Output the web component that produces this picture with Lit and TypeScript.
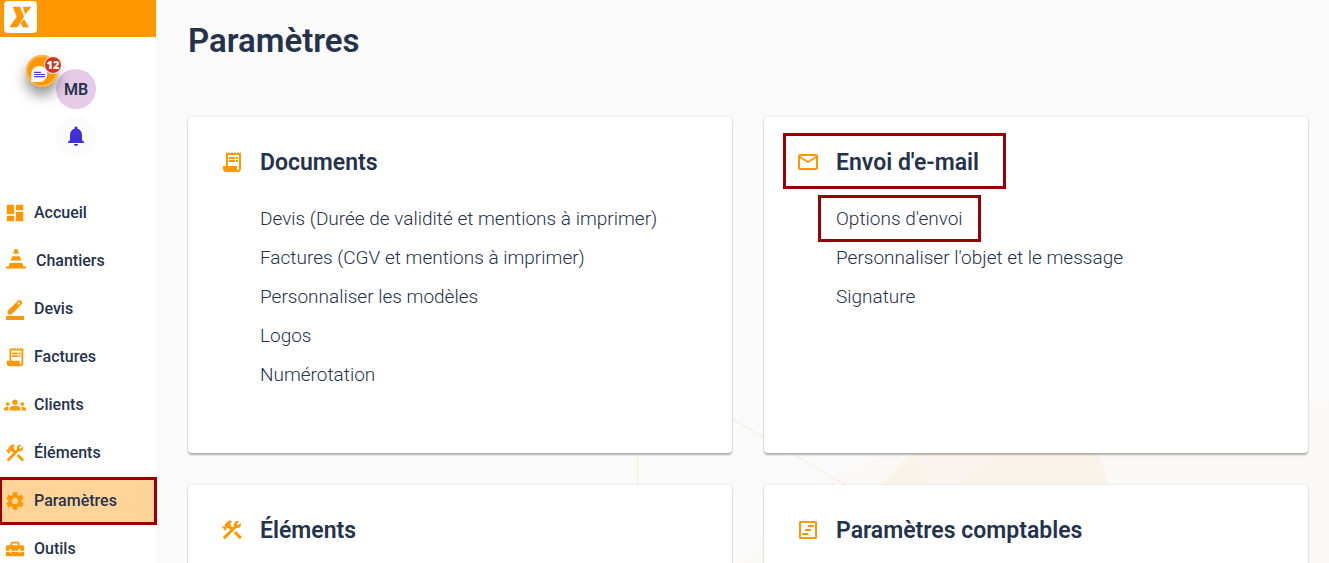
import { LitElement, html, css, svg } from "lit";
import { customElement, property } from "lit/decorators.js";
import { classMap } from "lit/directives/class-map.js";

const glyphs: Record<string, string> = {
  dashboard: "M3 13h8V3H3v10zm0 8h8v-6H3v6zm10 0h8V11h-8v10zm0-18v6h8V3h-8z",
  cone: "M11.2 0h1.6q.6 0 .8.6L15 4.800H9l1.400-4.200q.2-.6.8-.6zM8.200 7.200h7.600l1.500 4.300H6.700zM5.700 14h12.600l1.200 3.400H22v2H2v-2h2.500z",
  pencil: "M2.2 19.6h19.6V24H2.2zM4 18v-4L15.5 2.6q1.3-1.3 2.6 0l1.4 1.4q1.3 1.3 0 2.6L8 18zM16.2 4.4l-1.6 1.6 1.6 1.6 1.6-1.6z",
  receipt: "M19.5 3.5L18 2l-1.5 1.5L15 2l-1.5 1.5L12 2l-1.5 1.5L9 2 7.5 3.5 6 2v14H3v3c0 1.66 1.34 3 3 3h12c1.66 0 3-1.34 3-3V2l-1.5 1.5zM19 19c0 .55-.45 1-1 1s-1-.45-1-1v-3H8V5h11v14zM9 7h6v2H9zM16 7h2v2h-2zM9 10h6v2H9zM16 10h2v2h-2z",
  groups: "M12 12.75c1.63 0 3.07.39 4.24.9 1.08.48 1.76 1.56 1.76 2.73V18H6v-1.61c0-1.18.68-2.26 1.76-2.73 1.17-.52 2.61-.91 4.24-.91zM4 13c1.1 0 2-.9 2-2s-.9-2-2-2-2 .9-2 2 .9 2 2 2zm1.13 1.1c-.37-.06-.74-.1-1.13-.1-.99 0-1.93.21-2.78.58C.48 14.9 0 15.62 0 16.43V18h4.5v-1.61c0-.83.23-1.61.63-2.29zM20 13c1.1 0 2-.9 2-2s-.9-2-2-2-2 .9-2 2 .9 2 2 2zm4 3.43c0-.81-.48-1.53-1.22-1.85-.85-.37-1.79-.58-2.78-.58-.39 0-.76.04-1.13.1.4.68.63 1.46.63 2.29V18H24v-1.57zM12 6c1.66 0 3 1.34 3 3s-1.34 3-3 3-3-1.34-3-3 1.34-3 3-3z",
  construction: "M13.783 15.172l2.121-2.121 5.996 5.996-2.121 2.121zM17.5 10c1.93 0 3.5-1.57 3.5-3.5 0-.58-.16-1.12-.41-1.6l-2.7 2.7-1.49-1.49 2.7-2.7c-.48-.25-1.02-.41-1.6-.41C15.57 3 14 4.57 14 6.5c0 .41.08.8.21 1.16l-1.85 1.85-1.78-1.78.71-.71-1.41-1.41L12 3.49c-1.17-1.17-3.07-1.17-4.24 0L4.22 7.03l1.41 1.41H2.81l-.71.71 3.54 3.54.71-.71V9.15l1.41 1.41.71-.71 1.78 1.78-7.41 7.41 2.12 2.12L16.34 9.79c.36.13.75.21 1.16.21z",
  settings: "M19.14 12.94c.04-.3.06-.61.06-.94 0-.32-.02-.64-.07-.94l2.03-1.58c.18-.14.23-.41.12-.61l-1.92-3.32c-.12-.22-.37-.29-.59-.22l-2.39.96c-.5-.38-1.03-.7-1.62-.94l-.36-2.54c-.04-.24-.24-.41-.48-.41h-3.84c-.24 0-.43.17-.47.41l-.36 2.54c-.59.24-1.13.57-1.62.94l-2.39-.96c-.22-.08-.47 0-.59.22L2.74 8.87c-.12.21-.08.47.12.61l2.03 1.58c-.05.3-.09.63-.09.94s.02.64.07.94l-2.03 1.58c-.18.14-.23.41-.12.61l1.92 3.32c.12.22.37.29.59.22l2.39-.96c.5.38 1.03.7 1.62.94l.36 2.54c.05.24.24.41.48.41h3.84c.24 0 .44-.17.47-.41l.36-2.54c.59-.24 1.13-.56 1.62-.94l2.39.96c.22.08.47 0 .59-.22l1.92-3.32c.12-.22.07-.47-.12-.61l-2.01-1.58zM12 15.6c-1.98 0-3.6-1.62-3.6-3.6s1.62-3.6 3.6-3.6 3.6 1.62 3.6 3.6-1.62 3.6-3.6 3.6z",
  toolbox: "M18 16h-2v-1H8v1H6v-1H2v5h20v-5h-4zM20 8h-3V6c0-1.1-.9-2-2-2H9c-1.1 0-2 .9-2 2v2H4c-1.1 0-2 .9-2 2v4h4v-2h2v2h8v-2h2v2h4v-4c0-1.1-.9-2-2-2zm-5 0H9V6h6v2z",
  mail: "M20 4H4c-1.1 0-1.99.9-1.99 2L2 18c0 1.1.9 2 2 2h16c1.1 0 2-.9 2-2V6c0-1.1-.9-2-2-2zm0 14H4V8l8 5 8-5v10zm-8-7L4 6h16l-8 5z",
  accounts: "M4.5 3h15q1.5 0 1.5 1.5v15q0 1.5-1.5 1.5h-15Q3 21 3 19.5v-15Q3 3 4.5 3zM5 5v14h14V5zM12 7h6v2h-6zM9 11h6v2H9zM6 15h6v2H6z",
  bell: "M12 21c1.1 0 2-.9 2-2h-4c0 1.1.89 2 2 2zm6-6v-5c0-3.07-1.64-5.64-4.5-6.32V3c0-.83-.67-1.5-1.5-1.5s-1.5.67-1.5 1.5v.68C7.63 4.36 6 6.92 6 10v5l-2 2v1h16v-1l-2-2z",
};

@customElement("app-icon")
class AppIcon extends LitElement {
  @property() name = "";
  static styles = css`
    :host { display: block; flex: none; width: 22px; height: 22px; }
    svg { display: block; width: 100%; height: 100%; fill: currentColor; }
  `;
  render() {
    return html`<svg viewBox="0 0 24 24" aria-hidden="true">
      ${svg`<path fill-rule="evenodd" d=${glyphs[this.name] ?? ""}></path>`}
    </svg>`;
  }
}

const navItems = [
  { icon: "dashboard", label: "Accueil" },
  { icon: "cone", label: "Chantiers", large: true },
  { icon: "pencil", label: "Devis" },
  { icon: "receipt", label: "Factures" },
  { icon: "groups", label: "Clients" },
  { icon: "construction", label: "Éléments" },
  { icon: "settings", label: "Paramètres", active: true },
  { icon: "toolbox", label: "Outils" },
];

@customElement("side-bar")
class SideBar extends LitElement {
  static styles = css`
    :host { display: block; position: relative; z-index: 1; background: #fff; }
    .brand { display: flex; height: 37px; padding: 1px 4px; box-sizing: border-box; background: #ff9800; }
    .logo { display: block; width: 33px; height: 32px; }
    .user { display: flex; justify-content: center; padding: 32px 4px 32px 0; position: relative; }
    button { border: 0; padding: 0; font: inherit; color: inherit; cursor: pointer; }
    .avatar, .alerts { display: flex; align-items: center; justify-content: center; width: 40px; height: 40px; border-radius: 50%; }
    .avatar { background: #e6cbe9; font-size: 16px; font-weight: 600; }
    .alerts { background: #fafafa; }
    .profile { display: flex; flex-direction: column; gap: 8px; }
    .chat { position: absolute; left: 26px; top: 18px; width: 32px; height: 32px; border-radius: 50%; background: #ff9800; box-shadow: inset 0 0 0 2px #ffb74d, 0 8px 14px rgba(0, 0, 0, 0.45); }
    .bubble { display: block; width: 32px; height: 32px; }
    .badge { position: absolute; left: 18px; top: 1px; width: 16px; height: 16px; border: 1px solid #fff; border-radius: 50%; background: #cf3520; color: #fff; font: 800 11px/16px "Open Sans", sans-serif; text-align: center; }
    nav { display: flex; flex-direction: column; }
    a { display: flex; align-items: center; gap: 8px; height: 48px; padding: 0 4px; box-sizing: border-box; color: inherit; text-decoration: none; font-size: 16px; font-weight: 500; }
    .label { padding-bottom: 2px; }
    app-icon { color: #ff9800; }
    .large, .alerts app-icon { width: 24px; height: 24px; }
    .alerts app-icon { color: #3f2fd9; }
    .active { border: 3px solid #900; margin: 0 -1px; padding: 0 2px; background: #ffd498; }
  `;
  render() {
    return html`
      <header class="brand">
        <svg class="logo" viewBox="0 0 33 32" role="img" aria-label="Accueil">
          <rect width="33" height="32" rx="4" fill="#fff" />
          <path fill="#ff9800" d="M8.7 5.7H16L20 15.7L13.3 26.3H5.3L12.7 15.7zM19 5.7h8.7L21 13.5zM20 18l5 8.3h-6.3L16.7 22z" />
        </svg>
      </header>
      <div class="user">
        <div class="profile">
          <button class="avatar">MB</button>
          <button class="alerts" aria-label="Notifications"><app-icon name="bell"></app-icon></button>
        </div>
        <button class="chat" aria-label="Messages">
          <svg class="bubble" viewBox="0 0 32 32">
            <path fill="#fff" d="M5.3 27V19a8 8 0 1 1 8 8z" />
            <path stroke="#4a3fe0" stroke-width="1.2" d="M8 17.3h7M8 19.5h11M8 21.7h11" />
          </svg>
          <span class="badge">12</span>
        </button>
      </div>
      <nav>
        ${navItems.map((n) => html`<a href="#" class=${classMap({ active: !!n.active })}>
          <app-icon name=${n.icon} class=${classMap({ large: !!n.large })}></app-icon><span class="label">${n.label}</span></a>`)}
      </nav>`;
  }
}

interface Section { icon: string; title: string; marked?: boolean; links: { label: string; marked?: boolean }[]; }

const sections: Section[] = [
  { icon: "receipt", title: "Documents", links: [
    { label: "Devis (Durée de validité et mentions à imprimer)" },
    { label: "Factures (CGV et mentions à imprimer)" },
    { label: "Personnaliser les modèles" },
    { label: "Logos" },
    { label: "Numérotation" },
  ] },
  { icon: "mail", title: "Envoi d'e-mail", marked: true, links: [
    { label: "Options d'envoi", marked: true },
    { label: "Personnaliser l'objet et le message" },
    { label: "Signature" },
  ] },
  { icon: "construction", title: "Éléments", links: [] },
  { icon: "accounts", title: "Paramètres comptables", links: [] },
];

@customElement("settings-card")
class SettingsCard extends LitElement {
  @property({ attribute: false }) section!: Section;
  static styles = css`
    :host { display: block; box-sizing: border-box; min-height: 336px; padding: 29px 32px; border-radius: 4px; background: #fff; box-shadow: 0 2px 2px rgba(0, 0, 0, 0.28), 0 0 2px rgba(0, 0, 0, 0.12); }
    .head { position: relative; display: flex; align-items: center; gap: 16px; width: fit-content; }
    app-icon { width: 24px; height: 24px; color: #ff9800; }
    h2 { margin: 0; padding-top: 2px; font-size: 23px; line-height: 30px; font-weight: 600; }
    ul { list-style: none; margin: 0; padding: 21px 0 0 40px; }
    li { line-height: 39px; font-size: 19px; font-weight: 300; }
    a { position: relative; color: inherit; text-decoration: none; }
    .marked::after { content: ""; position: absolute; border: 3px solid #900; pointer-events: none; }
    .head.marked::after { inset: -13px -27px -11px -13px; }
    a.marked::after { inset: -12px -18px; }
  `;
  render() {
    const s = this.section;
    return html`
      <div class=${classMap({ head: true, marked: !!s.marked })}>
        <app-icon name=${s.icon}></app-icon><h2>${s.title}</h2>
      </div>
      <ul>${s.links.map((l) => html`<li><a href="#" class=${classMap({ marked: !!l.marked })}>${l.label}</a></li>`)}</ul>`;
  }
}

@customElement("app-root")
class AppRoot extends LitElement {
  static styles = css`
    :host { display: grid; grid-template-columns: 156px minmax(0, 1fr); height: 100vh; overflow: hidden; background: #fafafa; color: #25324b; font-family: Roboto, sans-serif; }
    main { position: relative; padding: 21px 21px 0 32px; overflow: hidden; }
    h1 { position: relative; margin: 0 0 56px; font-size: 33px; line-height: 40px; font-weight: 600; }
    .cards { position: relative; display: grid; grid-template-columns: repeat(2, minmax(0, 1fr)); gap: 32px; }
    .backdrop { position: absolute; left: 0; top: 0; width: 1173px; height: 563px; }
  `;
  render() {
    return html`
      <side-bar></side-bar>
      <main>
        <svg class="backdrop" viewBox="156 0 1173 563" aria-hidden="true">
          <path d="M806 485L910 445L1329 400V563H740z" fill="#faf9f7" />
          <path d="M880 485L912 453L945 425H1090L1109 485z" fill="#faf3ea" />
          <path d="M912 453H1000L960 485H930z" fill="#faf3ee" />
          <path d="M637.5 440V490M722 413L855 490" fill="none" stroke="#fde8cc" />
        </svg>
        <h1>Paramètres</h1>
        <div class="cards">${sections.map((s) => html`<settings-card .section=${s}></settings-card>`)}</div>
      </main>`;
  }
}
